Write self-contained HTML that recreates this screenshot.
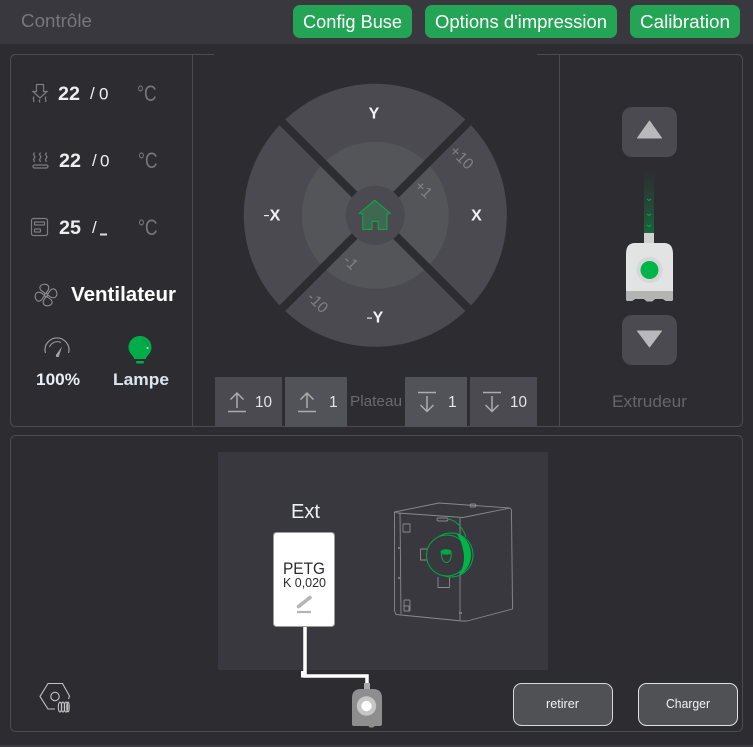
<!DOCTYPE html>
<html><head><meta charset="utf-8">
<style>
html,body{margin:0;padding:0;width:753px;height:747px;overflow:hidden;background:#2d2d31}
svg{display:block}
text{font-family:"Liberation Sans",sans-serif}
</style></head>
<body>
<svg width="753" height="747" viewBox="0 0 753 747" xmlns="http://www.w3.org/2000/svg">
<defs>
<linearGradient id="fg" x1="0" y1="0" x2="0" y2="1"><stop offset="0" stop-color="#00b04a" stop-opacity="0"/><stop offset=".5" stop-color="#00a845" stop-opacity=".2"/><stop offset="1" stop-color="#00a845" stop-opacity=".45"/></linearGradient>
</defs>
<rect width="753" height="747" fill="#2d2d31"/>
<rect width="753" height="44" fill="#38383e"/>
<rect y="745" width="753" height="2" fill="#3a3a40"/>
<text x="21" y="27" font-size="18" fill="#77777a" textLength="71" lengthAdjust="spacingAndGlyphs">Contrôle</text>
<g fill="#24a556">
<rect x="293" y="5" width="119" height="33" rx="7"/>
<rect x="425" y="5" width="192" height="33" rx="7"/>
<rect x="630" y="5" width="110" height="33" rx="7"/>
</g>
<g fill="#fff" font-size="18">
<text x="303" y="28" textLength="99" lengthAdjust="spacingAndGlyphs">Config Buse</text>
<text x="435" y="28" textLength="172" lengthAdjust="spacingAndGlyphs">Options d'impression</text>
<text x="640" y="28" textLength="90" lengthAdjust="spacingAndGlyphs">Calibration</text>
</g>

<!-- panel borders -->
<g fill="none" stroke="#4b4b50" stroke-width="1">
<path d="M214 54.500H15.500a5 5 0 0 0-5 5V421.500a5 5 0 0 0 5 5H737.500a5 5 0 0 0 5-5V59.500a5 5 0 0 0-5-5H537"/>
<path d="M192.500 54.500V426.500M559.500 54.500V426.500"/>
<rect x="10.500" y="435.500" width="732" height="296" rx="5"/>
</g>

<!-- left temps -->
<g fill="none" stroke="#7d7d81" stroke-width="1.200">
<path d="M36.500 84.500h7v7h3.500l-7 6.500-7-6.500h3.500z"/>
<path d="M34 96.500l-.8 2 .8 2-.5 1.500M40 99.500l-.8 1.500.8 1.500M46 96.500l-.8 2 .8 2-.5 1.500"/>
<path d="M34.500 152.500l-1 2 1.500 2.500-1.500 2.500 1 2.500M40.500 152.500l-1 2 1.500 2.500-1.500 2.500 1 2.500M46.500 152.500l-1 2 1.500 2.500-1.500 2.500 1 2.500"/>
<rect x="33" y="165" width="15" height="3" rx="1.500"/>
<rect x="31.500" y="218.500" width="16" height="17" rx="2"/>
<rect x="34.500" y="222" width="10" height="3" rx=".5"/>
<rect x="34.500" y="229" width="6" height="3" rx=".5"/>
</g>
<g fill="#eeeef0" font-weight="700" font-size="19">
<text x="58" y="100" textLength="22" lengthAdjust="spacingAndGlyphs">22</text>
<text x="59" y="167" textLength="22" lengthAdjust="spacingAndGlyphs">22</text>
<text x="59" y="234" textLength="22" lengthAdjust="spacingAndGlyphs">25</text>
</g>
<g fill="#eeeef0" font-size="17">
<text x="90" y="99">/</text><text x="99" y="99.500">0</text>
<text x="92" y="166">/</text><text x="100" y="166.500">0</text>
<text x="92" y="233">/</text>
</g>
<rect x="100" y="233.500" width="7" height="2" fill="#dddde0"/>
<g fill="#77777b" font-size="22">
<text x="137" y="101" textLength="19.500" lengthAdjust="spacingAndGlyphs">°C</text>
<text x="138" y="168" textLength="19.500" lengthAdjust="spacingAndGlyphs">°C</text>
<text x="138" y="235" textLength="19.500" lengthAdjust="spacingAndGlyphs">°C</text>
</g>

<!-- fan -->
<g fill="none" stroke="#8d8d90" stroke-width="1.100" transform="translate(46 295) rotate(-15)">
<circle r="1.500"/>
<path d="M0-1.500C-2-4-5-6-4-9C-2-12 3-11.500 4.500-8.500C5.500-5.500 2.500-3 0-1.500z"/>
<path d="M0-1.500C-2-4-5-6-4-9C-2-12 3-11.500 4.500-8.500C5.500-5.500 2.500-3 0-1.500z" transform="rotate(90)"/>
<path d="M0-1.500C-2-4-5-6-4-9C-2-12 3-11.500 4.500-8.500C5.500-5.500 2.500-3 0-1.500z" transform="rotate(180)"/>
<path d="M0-1.500C-2-4-5-6-4-9C-2-12 3-11.500 4.500-8.500C5.500-5.500 2.500-3 0-1.500z" transform="rotate(270)"/>
</g>
<text x="71" y="301" font-size="20" font-weight="700" fill="#fff" textLength="105" lengthAdjust="spacingAndGlyphs">Ventilateur</text>

<!-- gauge -->
<g fill="none" stroke="#9a9a9d" stroke-width="1.200">
<path d="M45.400 353A12 12 0 1 1 68.600 353"/>
<path d="M49.500 347A8.500 8.500 0 0 1 61 342.500" stroke-width="1"/>
</g>
<path d="M56.300 354.500L62 346.500L59 356z" fill="#a5a5a8"/>
<circle cx="57.500" cy="355.500" r="1.600" fill="#a5a5a8"/>
<text x="36" y="385" font-size="17" font-weight="700" fill="#e8eef5" textLength="44" lengthAdjust="spacingAndGlyphs">100%</text>
<!-- lamp -->
<path d="M140 336c6.500 0 11.500 5 11.500 11.500 0 4.500-3 7-5 9.500l-.5 2h-12l-.5-2c-2-2.500-5-5-5-9.500 0-6.500 5-11.500 11.500-11.500z" fill="#00ac47"/>
<rect x="136" y="361" width="8" height="2.500" rx="1" fill="#00ac47"/>
<path d="M143 340c3 .8 4.500 3 5 6" fill="none" stroke="#1d8a48" stroke-width="1.300"/>
<circle cx="147.500" cy="348" r="1" fill="#d9f5e4"/>
<text x="113" y="385" font-size="17" font-weight="700" fill="#dbe6f0" textLength="56" lengthAdjust="spacingAndGlyphs">Lampe</text>

<!-- circular pad -->
<circle cx="375.300" cy="215.300" r="131.500" fill="#4a4a50"/>
<circle cx="375.300" cy="215.300" r="73.500" fill="#545559"/>
<g stroke="#2d2d31" stroke-width="8">
<path d="M276 116L474.600 314.600M474.600 116L276 314.600"/>
</g>
<circle cx="375.300" cy="215.300" r="29.500" fill="#4a4a50"/>
<path d="M374.700 200.200L390.500 213.500 387 214V228.700a.7.700 0 0 1-.7.700H378.300V221.300H372V229.400H363.500a.7.700 0 0 1-.7-.7V214L359 213.500z" fill="#3f6853" stroke="#11a544" stroke-width="1.100" stroke-linejoin="round"/>
<g fill="#f0f2f5" font-weight="700" font-size="16" text-anchor="middle">
<text x="374" y="118.500">Y</text>
<text x="476.500" y="220.500">X</text>
<text x="275" y="220.500">X</text>
<text x="378" y="322.500">Y</text>
</g>
<rect x="264" y="215" width="5" height="1.200" fill="#e8e8ea"/>
<rect x="367" y="317.500" width="5" height="1.200" fill="#e8e8ea"/>
<g fill="#808084" font-size="15.500" text-anchor="middle">
<text transform="translate(458 161) rotate(45)">+10</text>
<text transform="translate(420 193) rotate(45)">+1</text>
<text transform="translate(347 266) rotate(45)">-1</text>
<text transform="translate(314 306) rotate(45)">-10</text>
</g>

<!-- z buttons -->
<rect x="215" y="377" width="67" height="50" fill="#4a4a50"/>
<rect x="285" y="377" width="62" height="50" fill="#525358"/>
<rect x="405" y="377" width="62" height="50" fill="#525358"/>
<rect x="470" y="377" width="67" height="50" fill="#4a4a50"/>
<g fill="none" stroke="#acacaf" stroke-width="1.500">
<path d="M228 411.500H246M237 408V393M230.500 399.500L237 393L243.500 399.500"/>
<path d="M298 411.500H316M307 408V393M300.500 399.500L307 393L313.500 399.500"/>
<path d="M418 392.500H436M427 396V411.500M420.500 405L427 411.500L433.500 405"/>
<path d="M483 392.500H501M492 396V411.500M485.500 405L492 411.500L498.500 405"/>
</g>
<g fill="#e4e4e8" font-size="15.500">
<text x="255" y="407" textLength="17" lengthAdjust="spacingAndGlyphs">10</text>
<text x="329" y="407">1</text>
<text x="448" y="407">1</text>
<text x="510" y="407" textLength="17" lengthAdjust="spacingAndGlyphs">10</text>
</g>
<text x="350" y="406" font-size="15" fill="#6a6a6e" textLength="52" lengthAdjust="spacingAndGlyphs">Plateau</text>

<!-- extruder -->
<rect x="622" y="107" width="55" height="50" rx="10" fill="#4a4a50"/>
<rect x="622" y="315" width="55" height="50" rx="10" fill="#4a4a50"/>
<path d="M649.500 121L661.500 138H637.500z" fill="#b9b9bb" stroke="#b9b9bb" stroke-linejoin="round"/>
<path d="M649.500 347L661.500 331H637.500z" fill="#b9b9bb" stroke="#b9b9bb" stroke-linejoin="round"/>
<rect x="644" y="172" width="10" height="61" fill="url(#fg)"/>
<g fill="none" stroke="#10c050" stroke-width="1" opacity=".7"><path d="M647 199l2 1.500 2-1.500M647 214l2 1.500 2-1.500M647 225l2 1.500 2-1.500"/></g>
<rect x="644" y="233" width="10" height="10" fill="#cfd1d0"/>
<path d="M626 254q0-11 9-11H664q9 0 9 11V299q0 2-2 2H666l-3-2H655l-3 2.500h-5l-3-2.500H635l-3 2H628q-2 0-2-2z" fill="#e2e4e3"/>
<path d="M626 291H673V299q0 2-2 2H666l-3-2H655l-3 2.500h-5l-3-2.500H635l-3 2H628q-2 0-2-2z" fill="#b4b5b3"/>
<circle cx="649.500" cy="270" r="13" fill="#d5d7d8"/>
<circle cx="649.500" cy="270" r="9" fill="#00b548"/>
<text x="612" y="407" font-size="17" fill="#66666a" textLength="75" lengthAdjust="spacingAndGlyphs">Extrudeur</text>

<!-- bottom panel -->
<rect x="218" y="452" width="330" height="218" fill="#38383e"/>
<text x="291" y="518" font-size="20" fill="#eef1f4" textLength="29" lengthAdjust="spacingAndGlyphs">Ext</text>
<rect x="273.500" y="532.500" width="61" height="94" rx="3" fill="#fff" stroke="#9a9a9d"/>
<text x="283" y="574" font-size="17" fill="#2b2b2e" textLength="42" lengthAdjust="spacingAndGlyphs">PETG</text>
<text x="283" y="587" font-size="13" fill="#2b2b2e" textLength="43" lengthAdjust="spacingAndGlyphs">K 0,020</text>
<path d="M298.500 606.500L310 597.500" stroke="#b4b4b6" stroke-width="3.500" stroke-linecap="round"/>
<path d="M297 612H311" stroke="#b4b4b6" stroke-width="2.200"/>
<path d="M305 627V676H367V684" fill="none" stroke="#fff" stroke-width="3.500"/>
<rect x="301" y="671" width="5" height="6.500" fill="#fff"/>
<!-- small extruder -->
<rect x="364" y="683" width="6" height="7" fill="#a8a8a8"/>
<path d="M352 698q0-9 9-9H373q9 0 9 9V724q0 2-2 2H375l-2 1.500h-3l-2-1.500H354q-2 0-2-2z" fill="#8e8e8e"/>
<circle cx="366.500" cy="706" r="9.700" fill="#c6c6c6"/>
<circle cx="366.500" cy="706" r="5.200" fill="#fff"/>

<!-- printer wireframe -->
<g fill="none" stroke="#8a8a8e" stroke-width=".9" stroke-linejoin="round">
<path d="M394.500 512L439 503L510 508L511.500 510L512.500 609L467 621H462L396 614.500L394.500 611z"/>
<path d="M394.500 512L398 513L463 517.500L510 508M400 513L401 614"/>
<path d="M460 518V620"/>
<rect x="403" y="524" width="7" height="8"/>
<rect x="404" y="600" width="6" height="11" rx="1"/><rect x="404" y="606" width="5" height="5"/>
<path d="M427 549h-6.500v11h6.500"/>
<path d="M438 577v10.500h11.500v-10.500"/>
<rect x="437" y="518" width="11" height="3" rx="1.500"/>
<rect x="470" y="504" width="6" height="3" rx="1.500"/>
</g>
<g fill="#77777b"><rect x="398" y="547" width="3" height="2"/><rect x="398" y="577" width="3" height="2"/><rect x="459" y="612" width="3" height="2"/></g>
<circle cx="451" cy="555" r="22" fill="none" stroke="#00a845"/>
<circle cx="447" cy="555.500" r="20.500" fill="#38383e" stroke="#00a845"/>
<path d="M448 519C456 520 463 528 466 537" fill="none" stroke="#00a845"/>
<path d="M456 533C466 537 471 545 471 555C471 565 465 572 459 576C463 568 465 560 463.500 552C462 544 460 538 456 533z" fill="#00b548"/>
<g fill="none" stroke="#00a845">
<path d="M441.500 552C441 558 443 562 446.500 562.500C450 562 452 558 451 552"/>
<ellipse cx="446" cy="552" rx="5" ry="2.300" fill="#00a845"/>
</g>

<!-- nozzle icon -->
<g fill="none" stroke="#c4c4c6" stroke-width="1.100">
<path d="M55 709H48L40 696.500L48 683.500H62.500L69.500 696L68.500 699"/>
<circle cx="55" cy="696.500" r="4.200"/>
<ellipse cx="60" cy="707" rx="1.700" ry="5"/><ellipse cx="63" cy="707" rx="1.700" ry="5"/><ellipse cx="66" cy="707" rx="1.700" ry="5"/><ellipse cx="68" cy="707" rx="1.200" ry="5"/>
</g>

<!-- load buttons -->
<rect x="513.500" y="683.500" width="99" height="42" rx="8" fill="#505155" stroke="#d8d8da"/>
<rect x="638.500" y="683.500" width="99" height="42" rx="8" fill="#505155" stroke="#e0e0e2"/>
<text x="546" y="708" font-size="13" fill="#f0f2f5" textLength="33" lengthAdjust="spacingAndGlyphs">retirer</text>
<text x="666" y="708" font-size="13" fill="#f0f2f5" textLength="44" lengthAdjust="spacingAndGlyphs">Charger</text>
</svg>
</body></html>
